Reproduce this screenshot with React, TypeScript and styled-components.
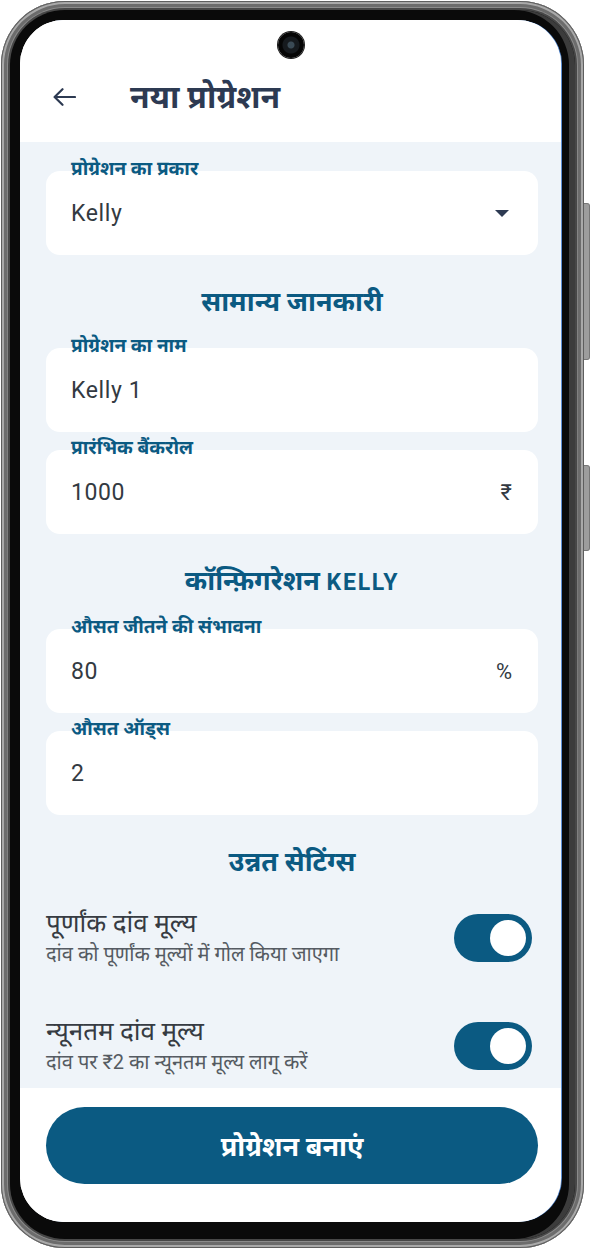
import React from "react";
import styled, { createGlobalStyle } from "styled-components";

const GlobalStyle = createGlobalStyle`
  body {
    margin: 0;
    background: #ffffff;
    font-family: Roboto, "Noto Sans", sans-serif;
  }
`;

const PRIMARY = "#0b5a82";

const Phone = styled.div`
  position: relative;
  width: 583px;
  height: 1247px;
  margin: 1px 0 0 1px;
  box-sizing: border-box;
  padding: 9px;
  border-radius: 64px;
  background: linear-gradient(180deg, #8c8c8c, #7a7a7a 50%, #8c8c8c);
  box-shadow: inset 0 0 0 1px #5e5e5e, inset 0 0 0 3px #a9a9a9, inset 0 0 0 6px #6c6c6c;
`;

const SideButton = styled.div<{ $top: number; $height: number }>`
  position: absolute;
  right: -6px;
  top: ${(p) => p.$top}px;
  width: 5px;
  height: ${(p) => p.$height}px;
  border-radius: 0 3px 3px 0;
  background: #9d9d9d;
  border: 1px solid #777;
  border-left: none;
`;

const Bezel = styled.div`
  height: 100%;
  box-sizing: border-box;
  padding: 10px 14px 17px 10px;
  border-radius: 55px;
  background: #0a0a0a;
  box-shadow: 0 0 0 2px #474747, inset -6px 0 0 #3c3c3c;
`;

const Screen = styled.div`
  position: relative;
  height: 100%;
  border-radius: 44px;
  overflow: hidden;
  background: #ffffff;
  display: flex;
  flex-direction: column;
  box-shadow: 1px 0 0 #5d8fd4;
`;

const Camera = styled.div`
  position: absolute;
  top: 12px;
  left: 50%;
  margin-left: -13px;
  width: 26px;
  height: 26px;
  border-radius: 50%;
  background: radial-gradient(circle at 50% 50%, #3a4a55 0 3px, #161a1e 4px 8px, #050505 9px);
  box-shadow: 0 0 0 1px #1a1a1a;
`;

const Header = styled.header`
  height: 122px;
  flex-shrink: 0;
  box-sizing: border-box;
  padding: 32px 0 0 32px;
  display: flex;
  align-items: center;
  gap: 54px;
  background: #ffffff;
`;

const BackButton = styled.button`
  border: none;
  background: none;
  padding: 0;
  width: 24px;
  height: 20px;
  display: flex;
  align-items: center;
  color: #2d3a52;
`;

const Title = styled.h1`
  margin: 0;
  font-size: 32px;
  line-height: 40px;
  font-weight: 700;
  color: #2d3a52;
`;

const Content = styled.main`
  flex: 1;
  background: #eff4f9;
  box-sizing: border-box;
  padding: 17px 23px 0 26px;
  display: flex;
  flex-direction: column;
`;

const Field = styled.div<{ $gap?: number }>`
  margin-top: ${(p) => p.$gap ?? 0}px;
  display: flex;
  flex-direction: column;
`;

const FieldLabel = styled.label`
  position: relative;
  z-index: 1;
  margin: 0 0 -8px 25px;
  font-size: 19px;
  line-height: 20px;
  font-weight: 700;
  color: ${PRIMARY};
`;

const FieldBox = styled.div`
  height: 84px;
  box-sizing: border-box;
  padding: 0 26px 0 25px;
  border-radius: 14px;
  background: #ffffff;
  display: flex;
  align-items: center;
  justify-content: space-between;
`;

const Value = styled.span`
  font-size: 23px;
  letter-spacing: 0.6px;
  color: #333a42;
`;

const Suffix = styled.span`
  font-size: 22px;
  color: #333a42;
`;

const Caret = styled.span`
  width: 0;
  height: 0;
  margin-right: 3px;
  border-left: 7px solid transparent;
  border-right: 7px solid transparent;
  border-top: 7px solid #2d3a52;
`;

const SectionTitle = styled.h2<{ $top: number; $bottom?: number }>`
  margin: ${(p) => p.$top}px 0 ${(p) => p.$bottom ?? 19}px;
  text-align: center;
  font-size: 27px;
  line-height: 30px;
  font-weight: 700;
  color: ${PRIMARY};
`;

const Latin = styled.span`
  font-size: 23px;
  letter-spacing: 1.8px;
`;

const SettingRow = styled.div<{ $top: number }>`
  margin-top: ${(p) => p.$top}px;
  display: flex;
  align-items: center;
  justify-content: space-between;
`;

const SettingText = styled.div`
  display: flex;
  flex-direction: column;
`;

const SettingTitle = styled.span`
  font-size: 26px;
  line-height: 30px;
  color: #363b42;
`;

const SettingHint = styled.span`
  margin-top: 3px;
  font-size: 20px;
  line-height: 26px;
  color: #555b62;
`;

const Toggle = styled.div<{ $on: boolean }>`
  width: 78px;
  height: 48px;
  margin-right: 6px;
  box-sizing: border-box;
  padding: 6px;
  border-radius: 24px;
  background: ${(p) => (p.$on ? PRIMARY : "#c5ccd3")};
  display: flex;
  justify-content: ${(p) => (p.$on ? "flex-end" : "flex-start")};
`;

const Knob = styled.span`
  width: 36px;
  height: 36px;
  border-radius: 50%;
  background: #ffffff;
`;

const Footer = styled.footer`
  height: 134px;
  flex-shrink: 0;
  box-sizing: border-box;
  padding: 19px 23px 0 26px;
  background: #ffffff;
`;

const PrimaryButton = styled.button`
  width: 100%;
  height: 77px;
  border: none;
  border-radius: 39px;
  background: ${PRIMARY};
  color: #ffffff;
  font-family: inherit;
  font-size: 27px;
  font-weight: 700;
`;

const ArrowBack = () => (
  <svg width="24" height="20" viewBox="0 0 24 20" fill="none">
    <path d="M23 10H3M10.5 2.2L2.6 10l7.9 7.8" stroke="currentColor" strokeWidth="2.2" strokeLinecap="round" strokeLinejoin="round" />
  </svg>
);

type FieldProps = { label: string; value: string; suffix?: React.ReactNode; gap?: number };

const InputField = ({ label, value, suffix, gap }: FieldProps) => (
  <Field $gap={gap}>
    <FieldLabel>{label}</FieldLabel>
    <FieldBox>
      <Value>{value}</Value>
      {suffix}
    </FieldBox>
  </Field>
);

const settings = [
  { title: "पूर्णांक दांव मूल्य", hint: "दांव को पूर्णांक मूल्यों में गोल किया जाएगा", top: 31 },
  { title: "न्यूनतम दांव मूल्य", hint: "दांव पर ₹2 का न्यूनतम मूल्य लागू करें", top: 49 },
];

export default function App() {
  return (
    <>
      <GlobalStyle />
      <Phone>
        <SideButton $top={202} $height={155} />
        <SideButton $top={464} $height={84} />
        <Bezel>
          <Screen>
            <Camera />
            <Header>
              <BackButton aria-label="back">
                <ArrowBack />
              </BackButton>
              <Title>नया प्रोग्रेशन</Title>
            </Header>
            <Content>
              <InputField label="प्रोग्रेशन का प्रकार" value="Kelly" suffix={<Caret />} />
              <SectionTitle $top={32}>सामान्य जानकारी</SectionTitle>
              <InputField label="प्रोग्रेशन का नाम" value="Kelly 1" />
              <InputField label="प्रारंभिक बैंकरोल" value="1000" suffix={<Suffix>₹</Suffix>} gap={6} />
              <SectionTitle $top={32}>
                कॉन्फ़िगरेशन <Latin>KELLY</Latin>
              </SectionTitle>
              <InputField label="औसत जीतने की संभावना" value="80" suffix={<Suffix>%</Suffix>} />
              <InputField label="औसत ऑड्स" value="2" gap={6} />
              <SectionTitle $top={32} $bottom={0}>
                उन्नत सेटिंग्स
              </SectionTitle>
              {settings.map((s) => (
                <SettingRow key={s.title} $top={s.top}>
                  <SettingText>
                    <SettingTitle>{s.title}</SettingTitle>
                    <SettingHint>{s.hint}</SettingHint>
                  </SettingText>
                  <Toggle $on>
                    <Knob />
                  </Toggle>
                </SettingRow>
              ))}
            </Content>
            <Footer>
              <PrimaryButton>प्रोग्रेशन बनाएं</PrimaryButton>
            </Footer>
          </Screen>
        </Bezel>
      </Phone>
    </>
  );
}
